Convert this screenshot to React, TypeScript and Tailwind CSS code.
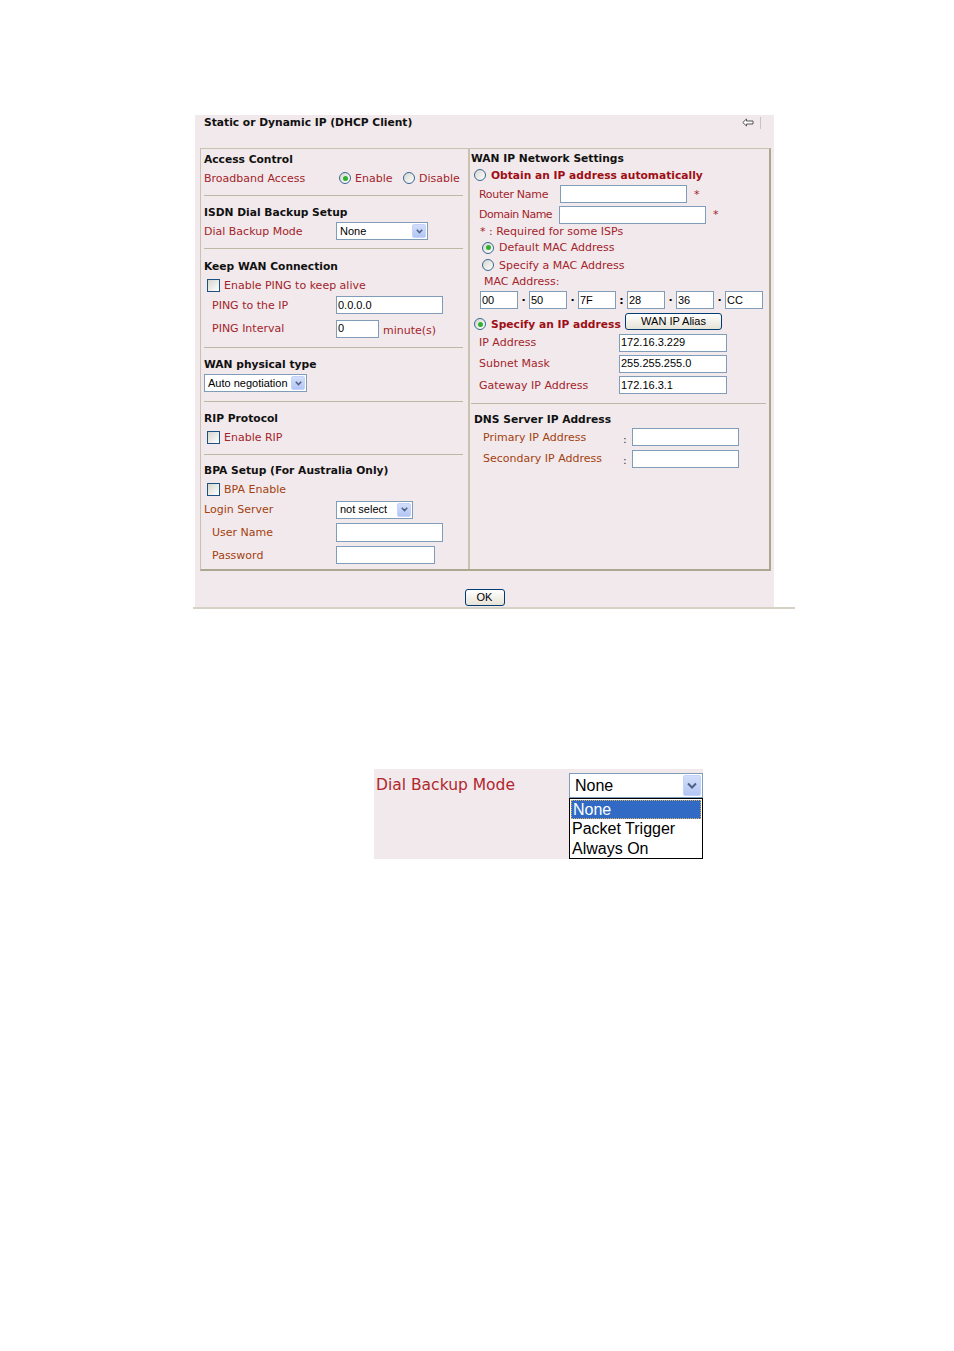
// @ts-nocheck
import React from 'react';

const RED = 'text-[#a3242b]';
const BROWN = 'text-[#a3420f]';

function Radio({ on = false }) {
  return (
    <span className="w-[12px] h-[12px] rounded-full border border-[#3a6690] bg-linear-to-br from-[#d6d6cf] to-white flex items-center justify-center shrink-0">
      {on && <span className="w-[5px] h-[5px] rounded-full bg-[#2fb02f]" />}
    </span>
  );
}

function Check() {
  return (
    <span className="w-[13px] h-[13px] border border-[#1c5180] bg-linear-to-br from-[#d6d6cf] to-white shrink-0" />
  );
}

function Chevron({ size = 'small' }) {
  if (size === 'big') {
    return (
      <svg width="10" height="7" viewBox="0 0 10 7">
        <path d="M1 1.5 L5 5.5 L9 1.5" fill="none" stroke="#4d6185" strokeWidth="2" />
      </svg>
    );
  }
  return (
    <svg width="7" height="5" viewBox="0 0 7 5">
      <path d="M0.8 0.8 L3.5 3.6 L6.2 0.8" fill="none" stroke="#4d6185" strokeWidth="1.5" />
    </svg>
  );
}

function Drop({ className, text }) {
  return (
    <div className={`${className} h-[18px] border border-[#7f9db9] bg-white flex items-center justify-between font-['Liberation_Sans',Arial,sans-serif] text-[11px] text-black`}>
      <span className="pl-[3px] leading-none">{text}</span>
      <span className="w-[14px] h-[14px] mr-[1px] rounded-[2px] bg-linear-to-b from-[#d2def9] to-[#b3c6f4] border border-[#c3d3fd] flex items-center justify-center">
        <Chevron />
      </span>
    </div>
  );
}

function Box({ className, value = '' }) {
  return (
    <div className={`${className} h-[18px] border border-[#7f9db9] bg-white flex items-center pl-[1px] font-['Liberation_Sans',Arial,sans-serif] text-[11px] text-black leading-none`}>
      {value}
    </div>
  );
}

function XpButton({ className, children }) {
  return (
    <div className={`${className} h-[17px] rounded-[3px] border border-[#003c74] bg-linear-to-b from-white to-[#e6e3d6] flex items-center justify-center font-['Liberation_Sans',Arial,sans-serif] text-[11px] text-black leading-none`}>
      {children}
    </div>
  );
}

function Head({ children, className = '' }) {
  return <span className={`mt-[2px] font-bold text-[10.7px] text-[#111] leading-none ${className}`}>{children}</span>;
}

function Divider({ className }) {
  return <div className={`${className} h-[1px] bg-[#bdb8a6] shrink-0`} />;
}

function Sep({ children }) {
  return <span className="w-[11px] text-center text-black font-bold">{children}</span>;
}

export default function App() {
  return (
    <div className="w-[954px] h-[1351px] bg-white pt-[115px] font-['DejaVu_Sans',Verdana,sans-serif] text-[11px] leading-none">
      <div className="ml-[193px] w-[602px]">
        <div className="ml-[2px] w-[579px] h-[492px] bg-[#f2e9ec] flex flex-col">
          {/* title */}
          <div className="h-[33px] flex items-start shrink-0">
            <div className="h-[14px] flex items-center pl-[9px]">
              <Head>Static or Dynamic IP (DHCP Client)</Head>
            </div>
            <div className="grow" />
            <div className="flex items-start pt-[2px] mr-[13px]">
              <svg width="12" height="9" viewBox="0 0 12 9" className="mt-[1px]">
                <path d="M0.8 4.5 L4.5 1 L4.5 3 L11 3 L11 6 L4.5 6 L4.5 8 Z" fill="white" stroke="#555" strokeWidth="1" />
              </svg>
              <span className="ml-[6px] w-[1px] h-[12px] bg-[#c4c4c4]" />
            </div>
          </div>

          {/* table */}
          <div className="ml-[5px] w-[571px] h-[423px] border-l border-t border-[#c7c3b0] border-r-2 border-b-2 border-r-[#aca88f] border-b-[#aca88f] flex shrink-0">
            {/* left column */}
            <div className="w-[267px] flex flex-col shrink-0">
              <div className="h-[20px] flex items-center pl-[3px]"><Head>Access Control</Head></div>
              <div className="h-[18px] flex items-center pl-[3px]">
                <span className={`w-[135px] ${RED}`}>Broadband Access</span>
                <Radio on />
                <span className={`ml-[4px] w-[48px] ${RED}`}>Enable</span>
                <Radio />
                <span className={`ml-[4px] ${RED}`}>Disable</span>
              </div>
              <div className="h-[8px]" />
              <Divider className="ml-[3px] w-[259px]" />

              <div className="h-[7px]" />
              <div className="h-[18px] flex items-center pl-[3px]"><Head>ISDN Dial Backup Setup</Head></div>
              <div className="h-[20px] flex items-center pl-[3px]">
                <span className={`w-[132px] ${RED}`}>Dial Backup Mode</span>
                <Drop className="w-[92px]" text="None" />
              </div>
              <div className="h-[7px]" />
              <Divider className="ml-[3px] w-[259px]" />

              <div className="h-[8px]" />
              <div className="h-[18px] flex items-center pl-[3px]"><Head>Keep WAN Connection</Head></div>
              <div className="h-[20px] flex items-center pl-[6px]">
                <Check />
                <span className={`ml-[4px] ${RED}`}>Enable PING to keep alive</span>
              </div>
              <div className="h-[20px] flex items-center pl-[11px]">
                <span className={`w-[124px] ${RED}`}>PING to the IP</span>
                <Box className="w-[107px]" value="0.0.0.0" />
              </div>
              <div className="h-[27px] flex items-center pl-[11px]">
                <span className={`w-[124px] ${RED}`}>PING Interval</span>
                <Box className="w-[43px]" value="0" />
                <span className={`ml-[4px] mt-[3px] ${RED}`}>minute(s)</span>
              </div>
              <div className="h-[5px]" />
              <Divider className="ml-[3px] w-[259px]" />

              <div className="h-[7px]" />
              <div className="h-[18px] flex items-center pl-[3px]"><Head>WAN physical type</Head></div>
              <div className="h-[20px] flex items-center pl-[3px]">
                <Drop className="w-[103px]" text="Auto negotiation" />
              </div>
              <div className="h-[8px]" />
              <Divider className="ml-[3px] w-[259px]" />

              <div className="h-[7px]" />
              <div className="h-[18px] flex items-center pl-[3px]"><Head>RIP Protocol</Head></div>
              <div className="h-[20px] flex items-center pl-[6px]">
                <Check />
                <span className={`ml-[4px] ${RED}`}>Enable RIP</span>
              </div>
              <div className="h-[7px]" />
              <Divider className="ml-[3px] w-[259px]" />

              <div className="h-[6px]" />
              <div className="h-[18px] flex items-center pl-[3px]"><Head>BPA Setup (For Australia Only)</Head></div>
              <div className="h-[20px] flex items-center pl-[6px]">
                <Check />
                <span className={`ml-[4px] ${BROWN}`}>BPA Enable</span>
              </div>
              <div className="h-[21px] flex items-center pl-[3px]">
                <span className={`w-[132px] ${BROWN}`}>Login Server</span>
                <Drop className="w-[77px]" text="not select" />
              </div>
              <div className="h-[24px] flex items-center pl-[11px]">
                <span className={`w-[124px] ${BROWN}`}>User Name</span>
                <Box className="w-[107px] h-[19px]" />
              </div>
              <div className="h-[22px] flex items-center pl-[11px]">
                <span className={`w-[124px] ${BROWN}`}>Password</span>
                <Box className="w-[99px]" />
              </div>
            </div>

            {/* right column */}
            <div className="w-[299px] border-l-2 border-[#c7c3b0] flex flex-col">
              <div className="h-[18px] flex items-center pl-[1px]"><Head>WAN IP Network Settings</Head></div>
              <div className="h-[16px] flex items-center pl-[4px]">
                <Radio />
                <span className="ml-[5px] mt-[2px] font-bold text-[10.7px] text-[#9e0f15]">Obtain an IP address automatically</span>
              </div>
              <div className="h-[22px] flex items-center pl-[9px]">
                <span className={`w-[81px] ${RED} tracking-[-0.3px]`}>Router Name</span>
                <Box className="w-[127px]" />
                <span className={`ml-[7px] ${RED}`}>*</span>
              </div>
              <div className="h-[19px] flex items-center pl-[9px]">
                <span className={`w-[80px] ${RED} tracking-[-0.5px]`}>Domain Name</span>
                <Box className="w-[147px]" />
                <span className={`ml-[7px] ${RED}`}>*</span>
              </div>
              <div className="h-[14px] flex items-center pl-[10px]">
                <span className={RED}>* : Required for some ISPs</span>
              </div>
              <div className="h-[19px] flex items-center pl-[12px]">
                <Radio on />
                <span className={`ml-[5px] ${RED}`}>Default MAC Address</span>
              </div>
              <div className="h-[16px] flex items-center pl-[12px]">
                <Radio />
                <span className={`ml-[5px] ${RED}`}>Specify a MAC Address</span>
              </div>
              <div className="h-[17px] flex items-center pl-[14px]">
                <span className={RED}>MAC Address:</span>
              </div>
              <div className="h-[20px] flex items-center pl-[10px]">
                <Box className="w-[38px]" value="00" />
                <Sep>·</Sep>
                <Box className="w-[38px]" value="50" />
                <Sep>·</Sep>
                <Box className="w-[38px]" value="7F" />
                <Sep>:</Sep>
                <Box className="w-[38px]" value="28" />
                <Sep>·</Sep>
                <Box className="w-[38px]" value="36" />
                <Sep>·</Sep>
                <Box className="w-[38px]" value="CC" />
              </div>
              <div className="h-[22px] flex items-center pl-[4px]">
                <span className="mt-[6px]"><Radio on /></span>
                <span className="ml-[5px] w-[134px] mt-[8px] font-bold text-[10.7px] text-[#9e0f15] whitespace-nowrap">Specify an IP address</span>
                <XpButton className="w-[97px]">WAN IP Alias</XpButton>
              </div>
              <div className="h-[21px] flex items-center pl-[9px]">
                <span className={`w-[140px] ${RED}`}>IP Address</span>
                <Box className="w-[108px]" value="172.16.3.229" />
              </div>
              <div className="h-[21px] flex items-center pl-[9px]">
                <span className={`w-[140px] ${RED}`}>Subnet Mask</span>
                <Box className="w-[108px]" value="255.255.255.0" />
              </div>
              <div className="h-[22px] flex items-center pl-[9px]">
                <span className={`w-[140px] ${RED}`}>Gateway IP Address</span>
                <Box className="w-[108px]" value="172.16.3.1" />
              </div>
              <div className="h-[7px]" />
              <Divider className="ml-[1px] w-[295px]" />
              <div className="h-[6px]" />
              <div className="h-[18px] flex items-center pl-[4px]"><Head>DNS Server IP Address</Head></div>
              <div className="h-[18px] flex items-center pl-[13px]">
                <span className={`w-[140px] ${BROWN}`}>Primary IP Address</span>
                <span className="w-[9px] text-[#333] mt-[4px]">:</span>
                <Box className="w-[107px]" />
              </div>
              <div className="h-[25px] flex items-center pl-[13px]">
                <span className={`w-[140px] ${BROWN}`}>Secondary IP Address</span>
                <span className="w-[9px] text-[#333] mt-[4px]">:</span>
                <Box className="w-[107px]" />
              </div>
            </div>
          </div>

          <div className="h-[18px] shrink-0" />
          <div className="flex justify-center shrink-0">
            <XpButton className="w-[40px]">OK</XpButton>
          </div>
        </div>
        <div className="h-[2px] bg-[#d6d3c6]" />
      </div>

      {/* dropdown close-up */}
      <div className="mt-[160px] ml-[374px] w-[329px] h-[90px] bg-[#f2e9ec] flex">
        <div className="w-[195px] pl-[2px] pt-[9px] text-[15.5px] text-[#b0272e] leading-none">Dial Backup Mode</div>
        <div className="flex flex-col pt-[4px]">
          <div className="w-[134px] h-[25px] border border-[#7f9db9] bg-white flex items-center justify-between font-['Liberation_Sans',Arial,sans-serif] text-[16px] text-black">
            <span className="pl-[5px] leading-none">None</span>
            <span className="w-[18px] h-[21px] mr-[1px] rounded-[2px] bg-linear-to-b from-[#d2def9] to-[#b3c6f4] border border-[#c3d3fd] flex items-center justify-center">
              <Chevron size="big" />
            </span>
          </div>
          <div className="w-[134px] h-[61px] border border-black bg-white flex flex-col font-['Liberation_Sans',Arial,sans-serif] text-[16px] text-black leading-none">
            <div className="mx-[1px] mt-[1px] h-[19px] bg-[#316ac5] border border-dotted border-[#d8b060] text-white flex items-center pl-[1px]">None</div>
            <div className="h-[20px] flex items-center pl-[2px]">Packet Trigger</div>
            <div className="h-[19px] flex items-center pl-[2px]">Always On</div>
          </div>
        </div>
      </div>
    </div>
  );
}
